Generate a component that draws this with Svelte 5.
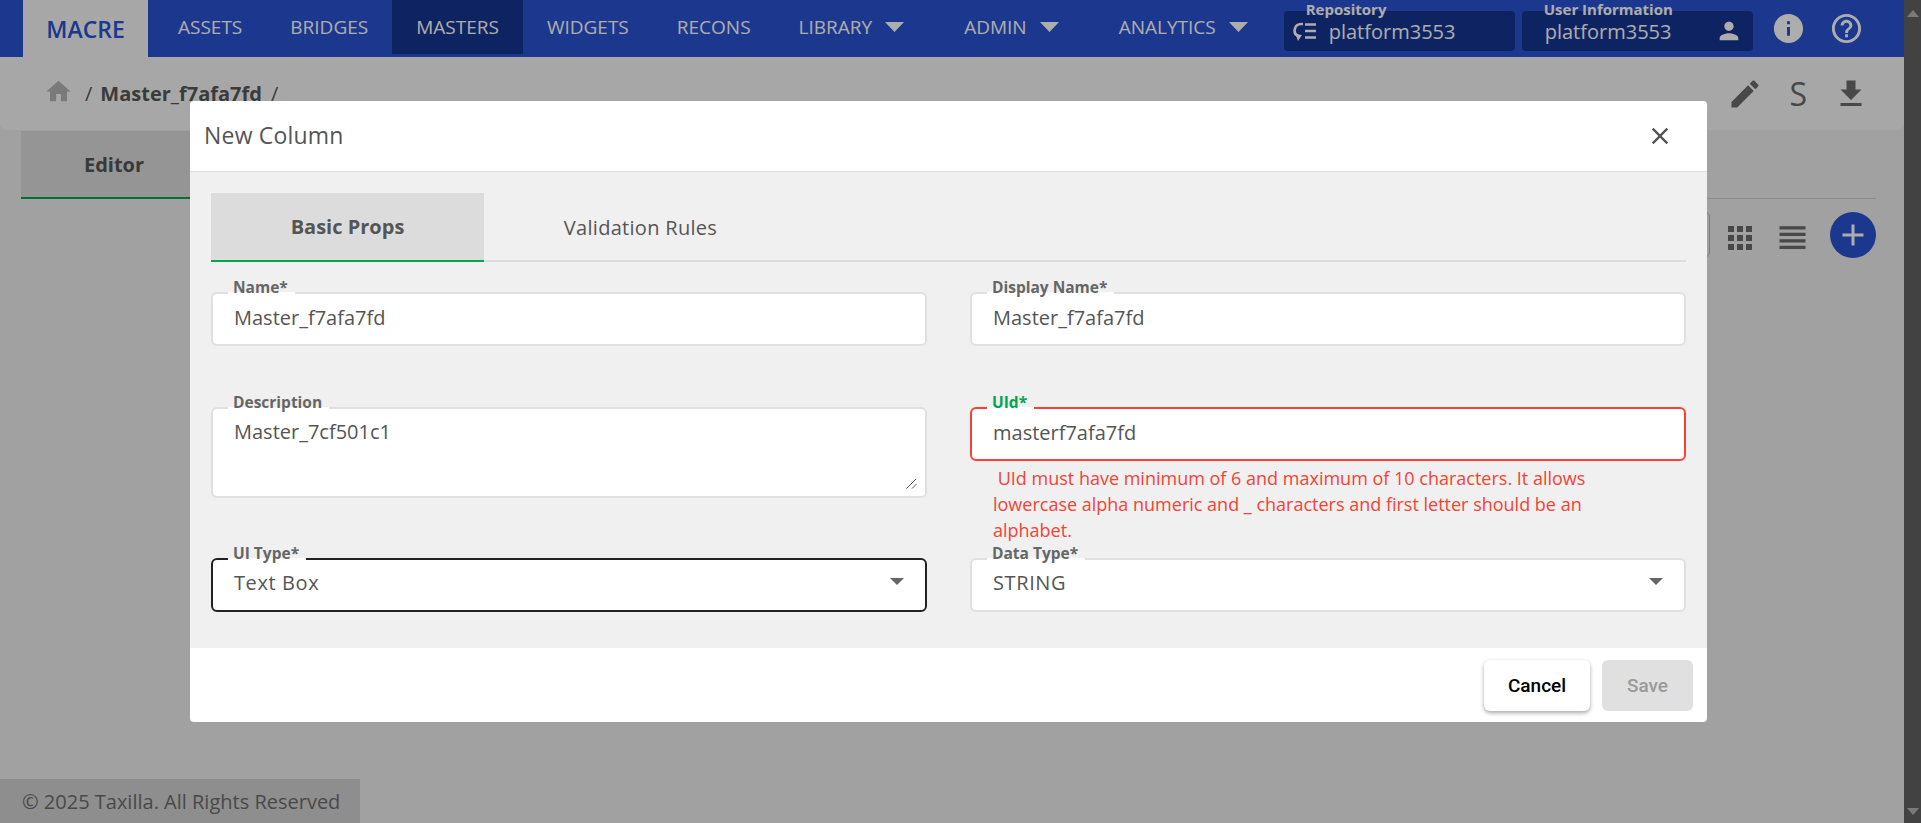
<script>
  const navItems = [
    { label: 'ASSETS' },
    { label: 'BRIDGES' },
    { label: 'MASTERS', active: true },
    { label: 'WIDGETS' },
    { label: 'RECONS' },
    { label: 'LIBRARY', caret: true },
    { label: 'ADMIN', caret: true },
    { label: 'ANALYTICS', caret: true }
  ];
  let name = $state('Master_f7afa7fd');
  let displayName = $state('Master_f7afa7fd');
  let description = $state('Master_7cf501c1');
  let uid = $state('masterf7afa7fd');
</script>

<div class="shell">
  <div class="page">
    <header class="topbar">
      <div class="brand">MACRE</div>
      <nav class="nav">
        {#each navItems as item}
          <div class="nav-item" class:active={item.active} class:has-caret={item.caret}>
            {item.label}
            {#if item.caret}
              <svg class="caret" viewBox="0 0 19 10"><polygon points="0,0 19,0 9.5,10" /></svg>
            {/if}
          </div>
        {/each}
      </nav>
      <div class="info-box repo">
        <span class="legend">Repository</span>
        <svg class="repo-icon" viewBox="0 0 24 24" fill="none" stroke="currentColor" stroke-width="2.6">
          <path d="M10 5H8a6.500 6.500 0 0 0-3 12.200" />
          <polygon points="2.500,15 9,16 5,22" fill="currentColor" stroke="none" />
          <path d="M12 5.500h11M12 12h11M12 18.500h11" />
        </svg>
        <span class="box-value">platform3553</span>
      </div>
      <div class="info-box user">
        <span class="legend">User Information</span>
        <span class="box-value">platform3553</span>
        <svg class="person" viewBox="0 0 24 24"><path d="M12 12c2.210 0 4-1.790 4-4s-1.790-4-4-4-4 1.790-4 4 1.790 4 4 4zm0 2c-2.670 0-8 1.340-8 4v2h16v-2c0-2.660-5.330-4-8-4z" /></svg>
      </div>
      <svg class="round-icon first" viewBox="0 0 24 24"><path d="M12 2C6.480 2 2 6.480 2 12s4.480 10 10 10 10-4.480 10-10S17.520 2 12 2zm1 15h-2v-6h2v6zm0-8h-2V7h2v2z" /></svg>
      <svg class="round-icon" viewBox="0 0 24 24"><path d="M11 18h2v-2h-2v2zm1-16C6.480 2 2 6.480 2 12s4.480 10 10 10 10-4.480 10-10S17.520 2 12 2zm0 18c-4.410 0-8-3.590-8-8s3.590-8 8-8 8 3.590 8 8-3.590 8-8 8zm0-14c-2.210 0-4 1.790-4 4h2c0-1.100.9-2 2-2s2 .9 2 2c0 2-3 1.750-3 5h2c0-2.250 3-2.500 3-5 0-2.210-1.790-4-4-4z" /></svg>
    </header>

    <div class="subheader">
      <svg class="home" viewBox="0 0 24 24"><path d="M10 20v-6h4v6h5v-8h3L12 3 2 12h3v8z" /></svg>
      <span class="slash">/</span>
      <strong class="crumb">Master_f7afa7fd</strong>
      <span class="slash">/</span>
      <div class="sub-actions">
        <svg class="sub-icon" viewBox="0 0 24 24"><path d="M3 17.250V21h3.750L17.810 9.940l-3.750-3.750L3 17.250zM20.710 7.040c.39-.39.39-1.020 0-1.410l-2.340-2.340c-.39-.39-1.020-.39-1.410 0l-1.830 1.830 3.750 3.750 1.830-1.830z" /></svg>
        <span class="sub-s">S</span>
        <svg class="sub-icon" viewBox="0 0 24 24"><path d="M19 9h-4V3H9v6H5l7 7 7-7zM5 18v2h14v-2H5z" /></svg>
      </div>
    </div>

    <main class="content">
      <div class="page-tabs">
        <div class="page-tab">Editor</div>
      </div>
      <div class="toolbar">
        <div class="search"></div>
        <svg class="apps" viewBox="0 0 24 24"><path d="M4 8h4V4H4v4zm6 12h4v-4h-4v4zm-6 0h4v-4H4v4zm0-6h4v-4H4v4zm6 0h4v-4h-4v4zm6-10v4h4V4h-4zm-6 4h4V4h-4v4zm6 6h4v-4h-4v4zm0 6h4v-4h-4v4z" /></svg>
        <svg class="lines" viewBox="0 0 24 24"><path d="M4 15h16v-2H4v2zm0 4h16v-2H4v2zm0-8h16V9H4v2zm0-6v2h16V5H4z" /></svg>
        <button class="fab" aria-label="Add">
          <svg viewBox="0 0 24 24"><path d="M19 13h-6v6h-2v-6H5v-2h6V5h2v6h6v2z" /></svg>
        </button>
      </div>
    </main>

    <footer class="copyright">© 2025 Taxilla. All Rights Reserved</footer>

    <div class="backdrop">
      <div class="dialog">
        <div class="dialog-head">
          <h2>New Column</h2>
          <svg class="close" viewBox="0 0 24 24"><path d="M19 6.410L17.590 5 12 10.590 6.410 5 5 6.410 10.590 12 5 17.590 6.410 19 12 13.410 17.590 19 19 17.590 13.410 12z" /></svg>
        </div>

        <div class="dialog-body">
          <div class="tabs">
            <div class="tab selected">Basic Props</div>
            <div class="tab">Validation Rules</div>
          </div>

          <div class="form">
            <div class="cell">
              <label class="field">
                <span class="float">Name*</span>
                <input bind:value={name} />
              </label>
            </div>
            <div class="cell">
              <label class="field">
                <span class="float">Display Name*</span>
                <input bind:value={displayName} />
              </label>
            </div>
            <div class="cell">
              <label class="field area">
                <span class="float">Description</span>
                <textarea bind:value={description}></textarea>
                <svg class="grip" viewBox="0 0 11 11"><path d="M0.500 10.500L10 1M6 10.500L10.500 6" /></svg>
              </label>
            </div>
            <div class="cell">
              <label class="field invalid">
                <span class="float green">UId*</span>
                <input bind:value={uid} />
              </label>
              <p class="error">&nbsp;UId must have minimum of 6 and maximum of 10 characters. It allows lowercase alpha numeric and _ characters and first letter should be an alphabet.</p>
            </div>
            <div class="cell last">
              <div class="field focused">
                <span class="float">UI Type*</span>
                <span class="select-value">Text Box</span>
                <svg class="arrow" viewBox="0 0 14 7"><polygon points="0,0 14,0 7,7" /></svg>
              </div>
            </div>
            <div class="cell last">
              <div class="field">
                <span class="float">Data Type*</span>
                <span class="select-value">STRING</span>
                <svg class="arrow" viewBox="0 0 14 7"><polygon points="0,0 14,0 7,7" /></svg>
              </div>
            </div>
          </div>
        </div>

        <div class="dialog-foot">
          <button class="btn cancel">Cancel</button>
          <button class="btn save" disabled>Save</button>
        </div>
      </div>
    </div>
  </div>

  <div class="scrollbar">
    <svg viewBox="0 0 12 7"><polygon points="6,0 12,7 0,7" /></svg>
    <svg viewBox="0 0 12 7"><polygon points="0,0 12,0 6,7" /></svg>
  </div>
</div>

<style>
  :global(body) {
    margin: 0;
    overflow: hidden;
    font-family: 'Open Sans', sans-serif;
  }

  .shell {
    display: flex;
    height: 823px;
    overflow: hidden;
  }

  .page {
    position: relative;
    flex: 1;
    min-width: 0;
    display: flex;
    flex-direction: column;
    background: #ededed;
    color: #555;
  }

  .scrollbar {
    width: 17px;
    background: #424242;
    display: flex;
    flex-direction: column;
    justify-content: space-between;
    align-items: center;
    padding: 10px 0 8px;
    box-sizing: border-box;
  }

  .scrollbar svg {
    width: 12px;
    height: 7px;
    fill: #7a7a7a;
  }

  /* top bar */
  .topbar {
    height: 57px;
    flex-shrink: 0;
    display: flex;
    align-items: flex-start;
    padding-left: 23px;
    background: #2952d2;
    color: #fff;
  }

  .brand {
    width: 125px;
    height: 57px;
    margin-right: 6px;
    display: flex;
    align-items: center;
    justify-content: center;
    background: #f7f7f7;
    color: #2952d2;
    font-size: 23px;
    font-weight: 600;
  }

  .nav {
    display: flex;
  }

  .nav-item {
    height: 54px;
    padding: 0 24px;
    display: flex;
    align-items: center;
    font-size: 19px;
    white-space: nowrap;
  }

  .nav-item.active {
    background: #163490;
  }

  .nav-item.has-caret {
    padding-right: 36px;
  }

  .caret {
    width: 19px;
    height: 10px;
    margin-left: 13px;
    fill: #fff;
  }

  .info-box {
    position: relative;
    width: 231px;
    height: 40px;
    margin-top: 11px;
    box-sizing: border-box;
    display: flex;
    align-items: center;
    background: #163490;
    border-radius: 4px;
  }

  .repo {
    margin-right: 7px;
    padding-left: 9px;
  }

  .user {
    padding: 0 10px 0 23px;
    justify-content: space-between;
  }

  .legend {
    position: absolute;
    left: 22px;
    top: -12px;
    font-size: 15px;
    font-weight: 700;
    line-height: 20px;
    white-space: nowrap;
  }

  .repo-icon {
    width: 24px;
    height: 24px;
    margin-right: 12px;
  }

  .box-value {
    font-size: 20px;
  }

  .person {
    width: 28px;
    height: 28px;
    fill: #fff;
  }

  .round-icon {
    width: 35px;
    height: 35px;
    margin-top: 11px;
    margin-left: 23px;
    fill: #fff;
  }

  .round-icon.first {
    margin-left: 18px;
  }

  /* breadcrumb row */
  .subheader {
    height: 73px;
    flex-shrink: 0;
    box-sizing: border-box;
    padding: 0 35px 0 44px;
    display: flex;
    align-items: center;
    background: #f7f7f7;
    border-radius: 0 0 6px 6px;
    font-size: 20px;
    color: #585858;
  }

  .home {
    width: 29px;
    height: 29px;
    margin: -5px 12px 0 0;
    fill: #b4b4b4;
  }

  .slash {
    margin-right: 8px;
  }

  .crumb {
    font-weight: 700;
    margin-right: 9px;
  }

  .sub-actions {
    margin-left: auto;
    display: flex;
    align-items: center;
    gap: 26px;
  }

  .sub-icon {
    width: 36px;
    height: 36px;
    fill: #6a6a6a;
  }

  .sub-s {
    font-size: 32px;
    color: #6a6a6a;
  }

  /* page content under the dialog */
  .content {
    flex: 1;
    padding: 1px 28px 0 21px;
  }

  .page-tabs {
    height: 68px;
    box-sizing: border-box;
    border-bottom: 1px solid #cecece;
  }

  .page-tab {
    width: 186px;
    height: 68px;
    box-sizing: border-box;
    display: flex;
    align-items: center;
    justify-content: center;
    background: #dcdcdc;
    border-bottom: 2px solid #00a651;
    font-size: 20px;
    font-weight: 700;
  }

  .toolbar {
    display: flex;
    align-items: center;
    justify-content: flex-end;
    margin-top: 12px;
  }

  .search {
    width: 60px;
    height: 45px;
    margin-right: 12px;
    border: 1px solid #bbb;
    border-radius: 6px;
  }

  .apps {
    width: 36px;
    height: 36px;
    fill: #6a6a6a;
    margin: 6px 15px 0 0;
  }

  .lines {
    width: 39px;
    height: 39px;
    fill: #6a6a6a;
    margin: 6px 18px 0 0;
  }

  .fab {
    width: 46px;
    height: 46px;
    padding: 5px;
    border: 0;
    border-radius: 50%;
    background: #2952d2;
  }

  .fab svg {
    display: block;
    width: 36px;
    height: 36px;
    fill: #fff;
  }

  .copyright {
    width: 360px;
    height: 44px;
    flex-shrink: 0;
    box-sizing: border-box;
    padding-left: 22px;
    display: flex;
    align-items: center;
    background: #d2d2d2;
    font-size: 20px;
    color: #6c6c6c;
  }

  /* dialog */
  .backdrop {
    position: absolute;
    inset: 0;
    padding: 101px 0 0 190px;
    background: rgba(0, 0, 0, 0.32);
  }

  .dialog {
    width: 1517px;
    border-radius: 4px;
    overflow: hidden;
    background: #fff;
  }

  .dialog-head {
    height: 71px;
    box-sizing: border-box;
    padding: 0 33px 0 14px;
    display: flex;
    align-items: center;
    justify-content: space-between;
    border-bottom: 1px solid #e0e0e0;
  }

  h2 {
    margin: 0 0 2px;
    font-size: 23px;
    font-weight: 500;
    letter-spacing: 0.2px;
    color: #555;
  }

  .close {
    width: 28px;
    height: 28px;
    fill: #555;
  }

  .dialog-body {
    height: 476px;
    box-sizing: border-box;
    padding: 21px 21px 0 21px;
    background: #f0f0f0;
  }

  .tabs {
    display: flex;
    height: 69px;
    box-sizing: border-box;
    border-bottom: 2px solid #dcdcdc;
  }

  .tab {
    width: 273px;
    height: 69px;
    box-sizing: border-box;
    display: flex;
    align-items: center;
    justify-content: center;
    font-size: 20px;
    letter-spacing: 0.3px;
    color: #555;
  }

  .tab + .tab {
    width: 313px;
  }

  .tab.selected {
    background: #dcdcdc;
    border-bottom: 2px solid #00a651;
    font-weight: 700;
    letter-spacing: 0;
  }

  .form {
    margin-top: 30px;
    display: grid;
    grid-template-columns: 716px 716px;
    column-gap: 43px;
  }

  .cell {
    min-height: 115px;
  }

  .cell.last {
    min-height: 0;
  }

  .field {
    position: relative;
    display: block;
    height: 54px;
    box-sizing: border-box;
    background: #fff;
    border: 2px solid #e0e0e0;
    border-radius: 6px;
  }

  .field.area {
    height: 91px;
  }

  .field.invalid {
    border-color: #f44336;
  }

  .field.focused {
    border-color: #222;
  }

  .float {
    position: absolute;
    left: 15px;
    top: -16px;
    padding: 0 7px 0 5px;
    font-size: 15.500px;
    font-weight: 700;
    line-height: 18px;
    color: #666;
    background: linear-gradient(#f0f0f0 14px, #fff 14px);
  }

  .float.green {
    color: #00a651;
  }

  input,
  textarea {
    width: 100%;
    height: 100%;
    box-sizing: border-box;
    padding: 0 21px;
    border: 0;
    outline: 0;
    background: transparent;
    font: 20px 'Open Sans', sans-serif;
    color: #555;
  }

  input {
    padding-bottom: 4px;
  }

  textarea {
    display: block;
    padding-top: 9px;
    resize: none;
  }

  .grip {
    position: absolute;
    right: 8px;
    bottom: 7px;
    width: 11px;
    height: 11px;
    fill: none;
    stroke: #555;
    stroke-width: 1;
  }

  .select-value {
    display: block;
    padding-left: 21px;
    font-size: 20px;
    letter-spacing: 0.6px;
    line-height: 46px;
  }

  .arrow {
    position: absolute;
    right: 21px;
    top: 18px;
    width: 14px;
    height: 7px;
    fill: #666;
  }

  .error {
    width: 625px;
    margin: 4px 0 15px;
    padding-left: 23px;
    font-size: 18px;
    line-height: 26px;
    color: #f44336;
  }

  .dialog-foot {
    height: 74px;
    box-sizing: border-box;
    padding: 12px 14px 0 0;
    display: flex;
    justify-content: flex-end;
    gap: 12px;
  }

  .btn {
    height: 51px;
    border: 0;
    border-radius: 6px;
    font: 500 19px Roboto, sans-serif;
  }

  .cancel {
    width: 106px;
    background: #fff;
    color: #000;
    box-shadow: 0 2px 4px rgba(0, 0, 0, 0.35);
  }

  .save {
    width: 91px;
    background: #e0e0e0;
    color: #9a9a9a;
  }
</style>
